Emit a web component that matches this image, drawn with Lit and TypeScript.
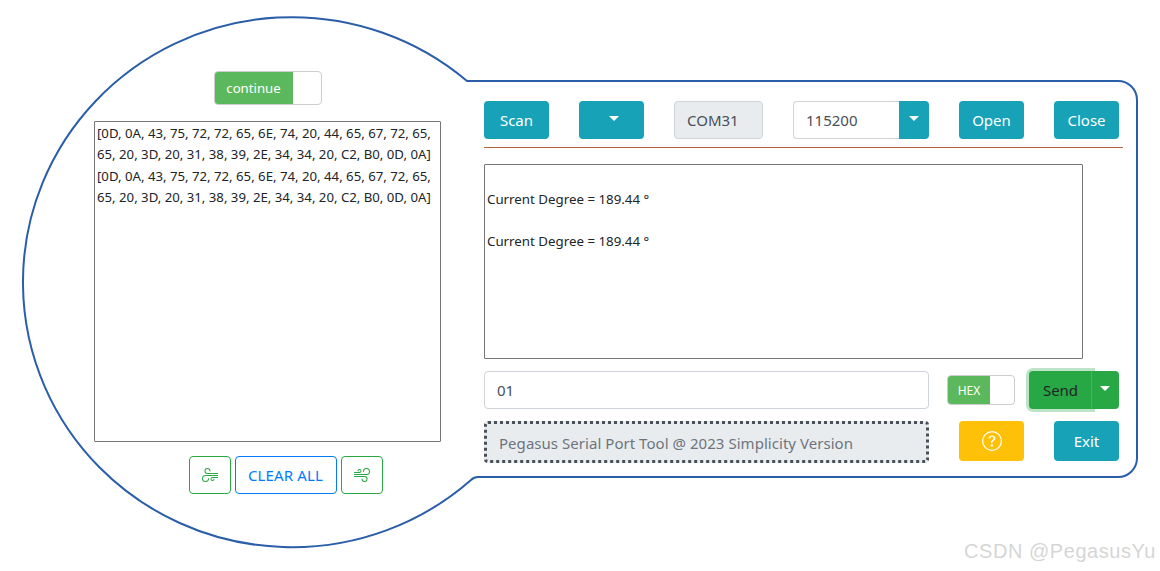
import { LitElement, html, css, svg } from "lit";
import { customElement } from "lit/decorators.js";

const WIND = svg`<path d="M12.5 2A2.5 2.5 0 0 0 10 4.5a.5.5 0 0 1-1 0A3.5 3.5 0 1 1 12.5 8H.5a.5.5 0 0 1 0-1h12a2.5 2.5 0 0 0 0-5zm-7 1a1 1 0 0 0-1 1 .5.5 0 0 1-1 0 2 2 0 1 1 2 2h-5a.5.5 0 0 1 0-1h5a1 1 0 0 0 0-2zM0 9.5A.5.5 0 0 1 .5 9h10.042a3 3 0 1 1-3 3 .5.5 0 0 1 1 0 2 2 0 1 0 2-2H.5a.5.5 0 0 1-.5-.5z" fill="currentColor"/>`;
const HEXLINE1 = "[0D, 0A, 43, 75, 72, 72, 65, 6E, 74, 20, 44, 65, 67, 72, 65,";
const HEXLINE2 = "65, 20, 3D, 20, 31, 38, 39, 2E, 34, 34, 20, C2, B0, 0D, 0A]";

@customElement("app-root")
export class AppRoot extends LitElement {
  static styles = css`
    :host { display: block; width: 1160px; height: 571px; position: relative; background: #fff; overflow: hidden;
      font-family: "Noto Sans", "Open Sans", sans-serif; color: #212529; }
    * { box-sizing: border-box; }
    .outline { position: absolute; left: 0; top: 0; }
    .watermark { position: absolute; left: 964px; top: 540px; font: 20px "Liberation Sans", sans-serif; letter-spacing: 0.55px; color: #d6d6d6; white-space: nowrap; }
    .page { position: relative; display: flex; width: 1160px; height: 571px; padding: 71px 0 0 94px; }
    .left { width: 347px; display: flex; flex-direction: column; align-items: center; }
    .toggle { display: flex; border: 1px solid #ccc; border-radius: 4px; overflow: hidden; background: #fff; }
    .toggle span { background: #5cb85c; color: #fff; display: flex; align-items: center; justify-content: center; }
    .toggle.cont { width: 108px; height: 34px; margin-bottom: 16px; }
    .toggle.cont span { width: 78px; font-size: 13.2px; }
    .toggle.hex { width: 68px; height: 30px; }
    .toggle.hex span { width: 42px; font-size: 12px; }
    .hexbox { width: 347px; height: 321px; border: 1px solid #767676; border-radius: 1px; padding: 1px 2px; font-size: 13.2px; line-height: 21.4px; color: #212529; white-space: nowrap; }
    .tools { display: flex; gap: 4px; margin: 14px 0 0 36px; }
    .btn { display: flex; align-items: center; justify-content: center; border-radius: 4px; font-size: 15px; height: 38px; border: 1px solid transparent; }
    .ic { width: 42px; border-color: #28a745; color: #28a745; }
    .flip { transform: rotate(180deg); }
    .clear { width: 102px; border-color: #007bff; color: #007bff; font-size: 15px; letter-spacing: 0.15px; }
    .right { width: 639px; margin-left: 43px; padding-top: 30px; display: flex; flex-direction: column; }
    .bar { display: flex; justify-content: space-between; width: 635px; height: 38px; }
    .info { width: 65px; background: #17a2b8; color: #fff; }
    .caret { width: 0; height: 0; border-left: 5px solid transparent; border-right: 5px solid transparent; border-top: 5px solid #fff; }
    .up { margin-top: -4px; }
    .shift { margin-left: 4px; }
    .field { border: 1px solid #ced4da; border-radius: 4px; font-size: 15px; color: #495057; display: flex; align-items: center; background: #fff; }
    .port { width: 89px; height: 38px; background: #e9ecef; padding-left: 12px; }
    .baud { display: flex; width: 136px; height: 38px; }
    .baud .field { width: 106px; height: 38px; border-radius: 4px 0 0 4px; border-right: 0; padding-left: 12px; }
    .baud .drop { width: 30px; background: #17a2b8; border-radius: 0 4px 4px 0; display: flex; align-items: center; justify-content: center; }
    hr { width: 639px; height: 1px; border: 0; margin: 8px 0 16px; background: #b5623a; }
    .log { width: 599px; height: 195px; border: 1px solid #767676; border-radius: 1px; padding: 24px 2px 0; font-size: 13.3px; line-height: 21px; color: #212529; }
    .log div { margin-bottom: 21px; }
    .row { display: flex; width: 635px; }
    .row.a { margin-top: 12px; height: 38px; align-items: center; }
    .row.b { margin-top: 12px; height: 40px; }
    .msg { width: 445px; height: 38px; padding-left: 12px; }
    .row.a .toggle { margin-left: 18px; }
    .send { display: flex; margin-left: 14px; }
    .send .main { width: 63px; height: 38px; background: #28a745; color: #212529; border-radius: 4px 0 0 4px; box-shadow: 0 0 0 3px rgba(40,167,69,.3); border-right: 1px solid #48b461; }
    .send .drop { position: relative; width: 27px; height: 38px; background: #28a745; border-radius: 0 4px 4px 0; display: flex; align-items: center; justify-content: center; padding-right: 2px; }
    .ver { width: 445px; height: 42px; background: #e9ecef; border: 3px dotted #495057; border-radius: 4px; color: #6c757d; font-size: 15px; display: flex; align-items: center; padding: 2px 0 0 12px; letter-spacing: 0.04px; }
    .help { width: 65px; height: 40px; background: #ffc107; color: #fff; margin-left: 30px; }
    .exit { height: 40px; margin-left: 30px; }
  `;

  render() {
    return html`
      <svg class="outline" width="1160" height="571" viewBox="0 0 1160 571">
        <path d="M467 81H1118A19 19 0 0 1 1137 100V458A19 19 0 0 1 1118 477H478Q474 477 471 480A269 265 0 1 1 467 81Z" fill="none" stroke="#2a5ea8" stroke-width="2"/>
      </svg>
      <div class="page">
        <section class="left">
          <div class="toggle cont"><span>continue</span></div>
          <div class="hexbox">
            <div>${HEXLINE1}</div><div>${HEXLINE2}</div><div>${HEXLINE1}</div><div>${HEXLINE2}</div>
          </div>
          <div class="tools">
            <div class="btn ic"><svg class="flip" width="16" height="16" viewBox="0 0 16 16">${WIND}</svg></div>
            <div class="btn clear">CLEAR ALL</div>
            <div class="btn ic"><svg width="16" height="16" viewBox="0 0 16 16">${WIND}</svg></div>
          </div>
        </section>
        <section class="right">
          <div class="bar">
            <div class="btn info">Scan</div>
            <div class="btn info"><i class="caret up shift"></i></div>
            <div class="field port">COM31</div>
            <div class="baud"><div class="field">115200</div><div class="drop"><i class="caret up"></i></div></div>
            <div class="btn info">Open</div>
            <div class="btn info">Close</div>
          </div>
          <hr />
          <div class="log"><div>Current Degree = 189.44 °</div><div>Current Degree = 189.44 °</div></div>
          <div class="row a">
            <div class="field msg">01</div>
            <div class="toggle hex"><span>HEX</span></div>
            <div class="send"><div class="btn main">Send</div><div class="drop"><i class="caret up"></i></div></div>
          </div>
          <div class="row b">
            <div class="ver">Pegasus Serial Port Tool @ 2023 Simplicity Version</div>
            <div class="btn help">
              <svg width="20" height="20" viewBox="0 0 16 16" fill="currentColor"><path d="M8 15A7 7 0 1 1 8 1a7 7 0 0 1 0 14zm0 1A8 8 0 1 0 8 0a8 8 0 0 0 0 16z"/><path d="M5.255 5.786a.237.237 0 0 0 .241.247h.825c.138 0 .248-.113.266-.25.09-.656.54-1.134 1.342-1.134.686 0 1.314.343 1.314 1.168 0 .635-.374.927-.965 1.371-.673.489-1.206 1.06-1.168 1.987l.003.217a.25.25 0 0 0 .25.246h.811a.25.25 0 0 0 .25-.25v-.105c0-.718.273-.927 1.01-1.486.609-.463 1.244-.977 1.244-2.056 0-1.511-1.276-2.241-2.673-2.241-1.267 0-2.655.59-2.75 2.286zm1.557 5.763c0 .533.425.927 1.01.927.609 0 1.028-.394 1.028-.927 0-.552-.42-.94-1.029-.94-.584 0-1.009.388-1.009.94z"/></svg>
            </div>
            <div class="btn info exit">Exit</div>
          </div>
        </section>
      </div>
      <div class="watermark">CSDN @PegasusYu</div>
    `;
  }
}
